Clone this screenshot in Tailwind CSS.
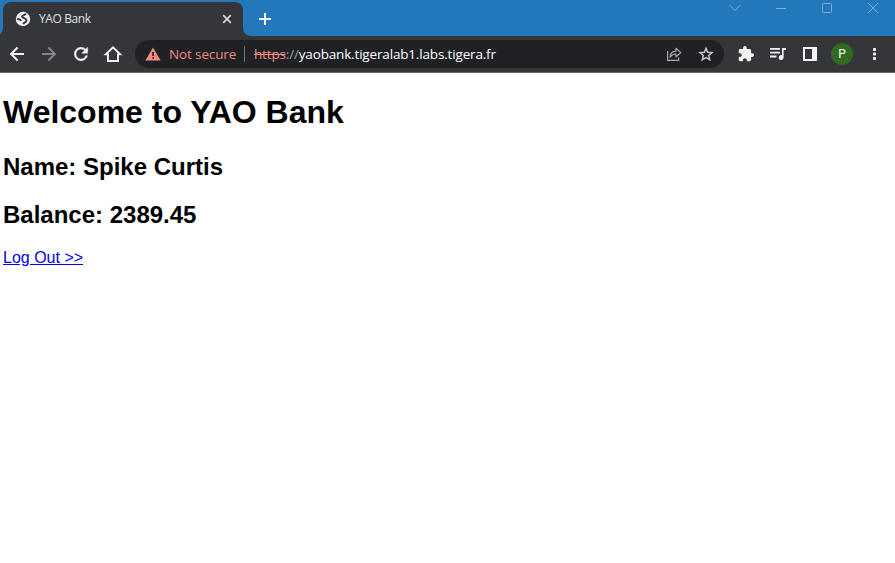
<!DOCTYPE html>
<html lang="en">
<head>
<meta charset="utf-8">
<title>YAO Bank</title>
<script src="https://cdn.jsdelivr.net/npm/@tailwindcss/browser@4"></script>
</head>
<body class="h-[563px] w-[895px] overflow-hidden bg-white flex flex-col font-['Open_Sans',sans-serif]">
<header class="shrink-0">
  <div class="h-9 bg-[#2378bc] flex items-start">
    <div class="relative mt-[2px] ml-[3px] h-[34px] w-60 rounded-t-[8px] bg-[#35363a] flex items-center pl-3 pr-[11px]">
      <svg class="absolute -left-2 bottom-0" width="8" height="8" viewBox="0 0 8 8"><path fill="#35363a" d="M8 0v8H0a8 8 0 0 0 8-8"/></svg>
      <svg class="absolute -right-2 bottom-0" width="8" height="8" viewBox="0 0 8 8"><path fill="#35363a" d="M0 0v8h8a8 8 0 0 1-8-8"/></svg>
      <svg width="16" height="16" viewBox="0 0 16 16"><circle cx="8" cy="8" r="7.200" fill="#f1f3f4"/><path fill="none" stroke="#35363a" stroke-width="1.900" d="M10.800 2.600C10.300 4.400 7.300 3.900 7.100 5.800 7.200 7.400 11.300 6.900 11.500 9.200 11.500 11.400 9.400 11.300 8 12.800M2.200 8C4 8 5.400 8.300 6.300 9.900"/></svg>
      <span class="ml-2 text-[12px] tracking-[-0.400px] leading-4 text-[#dee0e2]">YAO Bank</span>
      <svg class="ml-auto" width="10" height="10" viewBox="0 0 10 10"><path d="M1.200 1.200l7.600 7.600M8.800 1.200 1.200 8.800" stroke="#d5d7da" stroke-width="1.700"/></svg>
    </div>
    <svg class="ml-4 mt-[13px]" width="12" height="12" viewBox="0 0 12 12"><path d="M6 0v12M0 6h12" stroke="#fff" stroke-width="2"/></svg>
    <div class="ml-auto -mr-px flex items-start h-9 text-[#7bafd9]">
      <svg width="46" height="16" viewBox="0 0 46 16" fill="none" stroke="currentColor"><path d="M18 5.300l5 5.400 5-5.400"/></svg>
      <svg width="46" height="16" viewBox="0 0 46 16" fill="none" stroke="currentColor"><path d="M18 8.500h10"/></svg>
      <svg width="46" height="16" viewBox="0 0 46 16" fill="none" stroke="currentColor"><rect x="18.500" y="3.500" width="9" height="9" rx="1"/></svg>
      <svg width="46" height="16" viewBox="0 0 46 16" fill="none" stroke="currentColor"><path d="M18 3.200l10 9.600M28 3.200 18 12.800"/></svg>
    </div>
  </div>
  <nav class="h-[37px] bg-[#35363a] border-b border-[#65666a] flex items-center pl-px text-[#f1f3f4]">
    <span class="w-8 flex justify-center"><svg width="20" height="20" viewBox="0 0 20 20" fill="none" stroke="currentColor" stroke-width="2"><path d="M17 10H4.500M10.600 3.500 4.100 10l6.500 6.500"/></svg></span>
    <span class="w-8 flex justify-center text-[#85868a]"><svg width="20" height="20" viewBox="0 0 20 20" fill="none" stroke="currentColor" stroke-width="2"><path d="M3 10h12.500M9.400 3.500l6.500 6.500-6.500 6.500"/></svg></span>
    <span class="w-8 flex justify-center"><svg width="20" height="20" viewBox="0 0 24 24" fill="currentColor"><path d="M17.650 6.350C16.200 4.900 14.210 4 12 4c-4.420 0-7.990 3.580-7.990 8s3.570 8 7.990 8c3.730 0 6.840-2.550 7.730-6h-2.080c-.82 2.330-3.040 4-5.650 4-3.310 0-6-2.690-6-6s2.690-6 6-6c1.660 0 3.140.69 4.220 1.780L13 11h7V4z" stroke="currentColor" stroke-width=".6"/></svg></span>
    <span class="w-8 flex justify-center"><svg width="20" height="20" viewBox="0 0 20 20" fill="none" stroke="currentColor" stroke-width="1.900"><path d="M2.800 10.400H5V17h10v-6.600h2.200L10 3.300z"/></svg></span>
    <div class="ml-[6px] h-7 w-[589px] rounded-full bg-[#202124] flex items-center pl-[10px] pr-[9px] leading-5 whitespace-nowrap">
      <svg width="16" height="14" viewBox="0 0 16 14"><path fill="#f28b82" d="M8 .5 15.600 13.500H.4z"/><path fill="#202124" d="M7.200 5h1.700v4H7.200zM7.200 10.200h1.700v1.600H7.200z"/></svg>
      <span class="ml-2 w-[75px] text-[13.5px] tracking-[-0.130px] text-[#f28b82]">Not secure</span>
      <span class="h-4 w-px bg-[#73757a]"></span>
      <span class="ml-[9px] text-[13.5px] tracking-[-0.165px] text-[#9aa0a6]"><span class="text-[#f28b82] line-through">https</span>://<span class="text-white">yaobank.tigeralab1.labs.tigera.fr</span></span>
      <span class="ml-auto text-[#a5a8ac] flex gap-4">
        <svg width="16" height="16" viewBox="0 0 16 16" fill="none" stroke="currentColor" stroke-width="1.200"><path d="M1.600 5v9.400h11V11.500"/><path stroke-linejoin="round" d="M4 11.200C4.300 7.500 6.500 5.300 10 5.100V2.300l4.800 4.300-4.800 4.200V8C7.400 8 5.500 9 4 11.200z"/></svg>
        <svg class="text-[#c4c6c9] mr-px" width="16" height="16" viewBox="0 0 16 16" fill="none" stroke="currentColor" stroke-width="1.500"><path d="M8 2.300l1.700 4 4.300.4-3.300 2.800 1 4.200L8 11.500l-3.700 2.200 1-4.200L2 6.700l4.300-.4z"/></svg>
      </span>
    </div>
    <div class="ml-[6px] flex items-center">
      <span class="w-8 flex justify-center"><svg width="16" height="16" viewBox="1 1 22 22" fill="currentColor"><path d="M20.500 11H19V7c0-1.100-.9-2-2-2h-4V3.500a2.500 2.500 0 0 0-5 0V5H4c-1.100 0-1.990.9-1.990 2v3.800H3.500c1.490 0 2.700 1.210 2.700 2.700s-1.210 2.700-2.700 2.700H2V20c0 1.100.9 2 2 2h3.800v-1.500c0-1.490 1.210-2.700 2.700-2.700s2.700 1.210 2.700 2.700V22H17c1.100 0 2-.9 2-2v-4h1.500a2.500 2.500 0 0 0 0-5"/></svg></span>
      <span class="w-8 flex justify-center"><svg width="16" height="14" viewBox="0 0 16 14" fill="currentColor"><path d="M0 1h10v1.800H0zM0 4.800h10v1.800H0zM0 8.600h6.500v1.800H0zM12 1h4v1.900h-2.400v7.600A2.400 2.400 0 1 1 12 8.300z"/></svg></span>
      <span class="w-8 flex justify-center"><svg width="14" height="14" viewBox="0 0 14 14"><path fill="currentColor" fill-rule="evenodd" d="M0 0h14v14H0zM2 2v10h7V2z"/></svg></span>
      <span class="w-8 flex justify-center"><span class="size-[22px] rounded-full bg-[#33691e] text-white text-[12px] font-['Roboto',sans-serif] flex items-center justify-center">P</span></span>
      <span class="w-[33px] flex justify-center"><svg width="3" height="14" viewBox="0 0 3 14" fill="currentColor"><rect y="1" width="3" height="3" rx="1"/><rect y="5.500" width="3" height="3" rx="1"/><rect y="10" width="3" height="3" rx="1"/></svg></span>
    </div>
  </nav>
</header>
<main class="flex-1 pl-[3px] pt-5 font-['Liberation_Sans',Arial,sans-serif] text-black">
  <h1 class="text-[32px] leading-[38px] font-bold">Welcome to YAO Bank</h1>
  <h2 class="mt-[22px] text-[24px] leading-7 font-bold">Name: Spike Curtis</h2>
  <h2 class="mt-5 text-[24px] leading-7 font-bold">Balance: 2389.45</h2>
  <a href="#" class="mt-5 block w-fit text-[16px] leading-[18px] text-[#0000ee] underline">Log Out &gt;&gt;</a>
</main>
</body>
</html>
